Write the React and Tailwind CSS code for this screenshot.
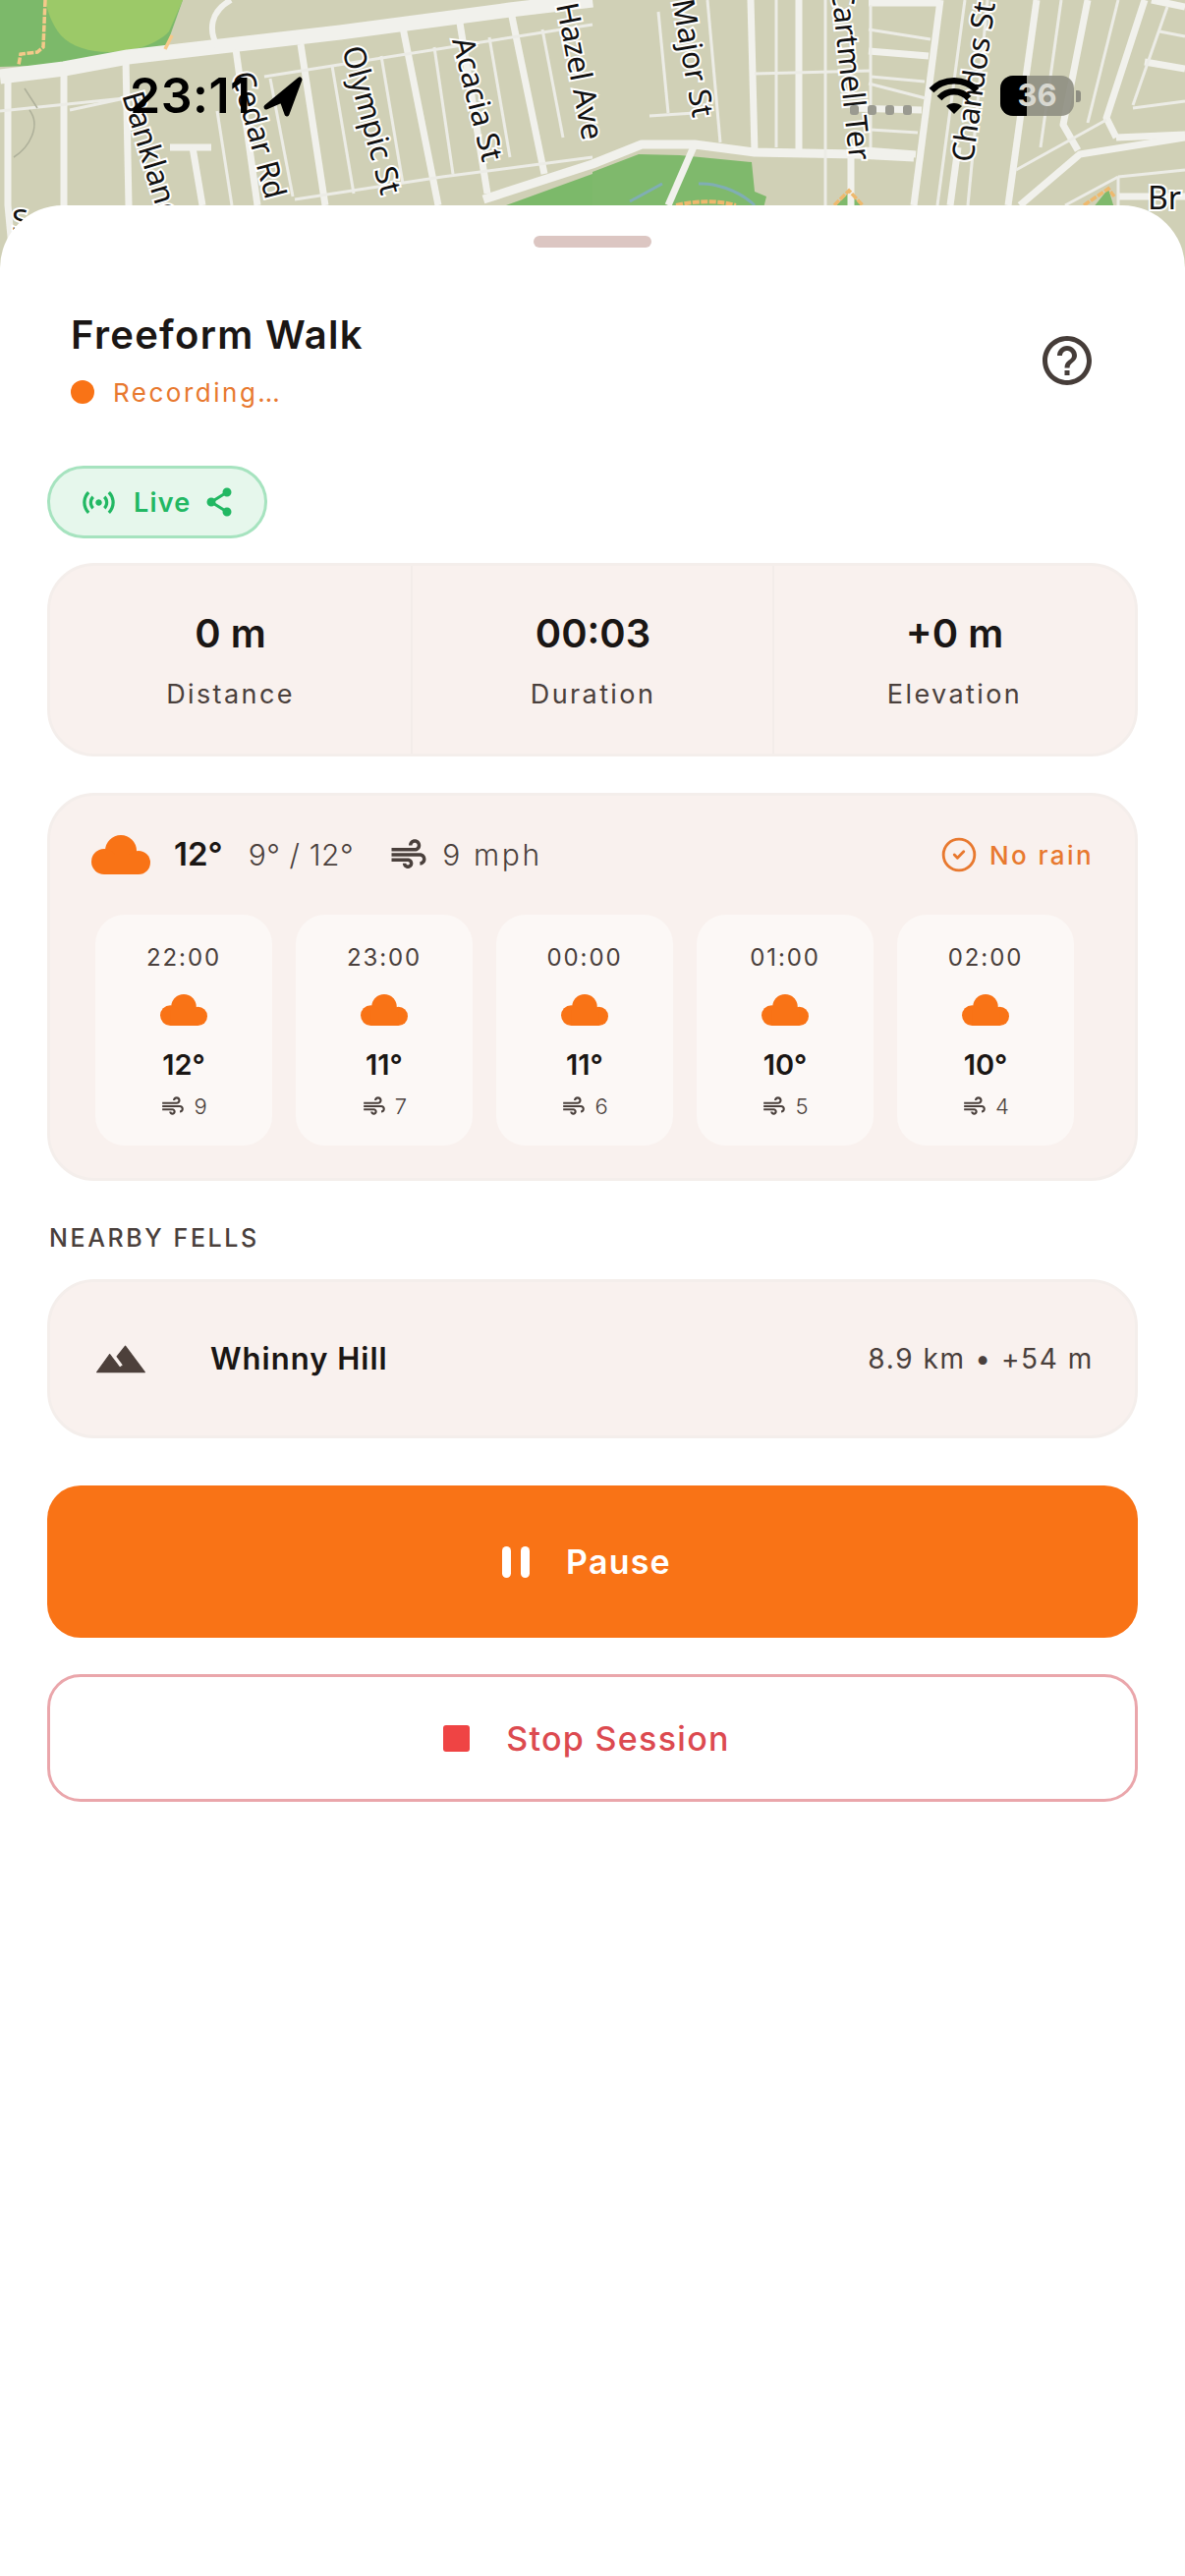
import React from "react";
import { MdAir, MdHelpOutline, MdSensors } from "react-icons/md";
import { CircleCheck } from "lucide-react";

const wide = [
  "0,78 65,70 130,58 346,33 519,10 603,0",
  "8,78 8,209 14,273", "65,70 65,273", "128,60 131,209", "240,50 262,209",
  "306,45 331,209", "410,28 446,209", "467,17 496,197", "519,7 554,177", "173,150 215,150", "196,150 206,209",
  "492,203 603,167 653,147 707,147 768,155 872,157 930,160",
  "707,147 680,209", "764,0 768,155", "813,0 813,157", "866,157 866,209", "884,3 957,3", "884,52 945,57", "865,110 938,112",
  "880,153 932,157", "957,0 930,209", "1055,0 1026,209", "1107,0 1082,127 1097,153", "1165,0 1126,120 1136,140", "1038,209 1099,157 1206,140",
  "1136,140 1206,137", "1165,63 1206,70", "1172,0 1206,7", "967,209 975,150", "1206,200 1138,200",
];
const thin = [
  "0,113 127,100", "71,112 127,100", "269,78 603,25", "300,203 450,180 603,160", "338,67 360,197", "388,57 410,187", "442,48 461,177", "498,38 519,160",
  "552,30 573,140", "221,113 236,209", "275,80 298,200", "670,12 680,115", "720,0 733,145", "661,118 707,115", "768,75 886,72", "790,0 790,150", "840,0 840,209",
  "886,5 886,150", "884,30 947,40", "884,85 942,100", "886,78 941,83", "886,132 934,135", "982,0 954,209", "1005,0 985,209", "1080,0 1059,150",
  "1138,0 1107,125", "1034,173 1126,122", "1180,32 1206,37", "1188,7 1153,107", "1153,110 1206,103", "1138,180 1206,173", "1138,180 1138,209", "1084,209 1138,180",
];
const labels = [
  ["Banklands", 124, 97, 73],
  ["Cedar Rd", 236, 76, 75],
  ["Olympic St", 348, 50, 75],
  ["Acacia St", 460, 41, 76],
  ["Hazel Ave", 566, 5, 79],
  ["Major St", 684, 1, 80],
  ["Cartmell Ter", 846, -12, 84],
  ["Chandos St", 990, 166, -82],
];

function MapPicture() {
  return (
    <svg width="1206" height="273" viewBox="0 0 1206 273" className="block">
      <rect width="1206" height="273" fill="#d0d0b6" />
      <path d="M0 0H186L170 45L150 56L65 66L0 68Z" fill="#7cb96a" />
      <path d="M46 0H186L172 32C150 56 85 62 62 36C52 24 48 10 46 0Z" fill="#9cc968" />
      <path d="M515 209L603 177V273H515Z" fill="#7cb96a" />
      <path d="M603 175L650 157L692 158L765 165L768 195L780 200L775 220H603Z" fill="#7fb96c" />
      <path d="M848 212L864 196L880 212Z" fill="#7fb96c" />
      <path d="M1112 212L1128 192L1134 212Z" fill="#7fb96c" />
      {wide.map((p) => (
        <polyline key={p} points={p} fill="none" stroke="#f1f1ec" strokeWidth={p.startsWith("0,78") ? 15 : p.startsWith("492") ? 9 : 7} strokeLinejoin="round" />
      ))}
      {thin.map((p) => (
        <polyline key={p} points={p} fill="none" stroke="#ecece6" strokeWidth="3" />
      ))}
      <path d="M221 47C212 30 214 12 235 0" fill="none" stroke="#f1f1ec" strokeWidth="6" />
      <path d="M46 0L44 48L38 53L21 55L19 66" fill="none" stroke="#f5c98a" strokeWidth="3.5" strokeDasharray="7 1.5" />
      <path d="M175 36L168 50" fill="none" stroke="#f5c98a" strokeWidth="3.5" />
      <path d="M688 209C710 204 730 204 749 209" fill="none" stroke="#eeb96e" strokeWidth="4" strokeDasharray="7 1.5" />
      <path d="M849 209L864 194L878 209" fill="none" stroke="#eeb96e" strokeWidth="3.5" strokeDasharray="7 1.5" />
      <path d="M1103 209L1128 192L1134 200" fill="none" stroke="#eeb96e" strokeWidth="3.5" strokeDasharray="7 1.5" />
      <path d="M641 205L674 187M711 187C725 186 750 192 768 209" fill="none" stroke="#80aeb4" strokeWidth="3" />
      <path d="M30 112C42 128 30 150 14 160M25 90L38 110" fill="none" stroke="#aeb09a" strokeWidth="1.5" />
      {labels.map(([t, x, y, r]) => (
        <text
          key={t}
          transform={`translate(${x} ${y}) rotate(${r})`}
          fontFamily="'Noto Sans', sans-serif"
          fontSize="31"
          fill="#111"
          stroke="#fff"
          strokeWidth="4"
          paintOrder="stroke"
        >
          {t}
        </text>
      ))}
      <text x="1168" y="213" fontFamily="'Noto Sans', sans-serif" fontSize="32" fill="#111" stroke="#fff" strokeWidth="4" paintOrder="stroke">Br</text>
      <text x="12" y="235" fontFamily="'Noto Sans', sans-serif" fontSize="31" fill="#111" stroke="#fff" strokeWidth="4" paintOrder="stroke">S</text>
    </svg>
  );
}

function Cloud({ className }) {
  return (
    <svg viewBox="0 0 60 40" className={className} fill="#f97316">
      <circle cx="30" cy="16" r="16" />
      <circle cx="13" cy="27" r="13" />
      <circle cx="48" cy="28" r="12" />
      <rect x="13" y="20" width="35" height="20" />
    </svg>
  );
}

function StatusBar() {
  return (
    <div className="absolute left-0 top-0 w-full h-[130px] pointer-events-none">
      <div className="absolute left-[132px] top-[72px] text-[50px] leading-[50px] font-semibold text-black font-['Inter',sans-serif] tracking-[0.5px]">23:11</div>
      <svg className="absolute left-[266px] top-[76px]" width="44" height="45" viewBox="0 0 44 45" fill="#000">
        <path d="M5 33L39 5L26 40L21 26Z" stroke="#000" strokeWidth="5" strokeLinejoin="round" />
      </svg>
      <div className="absolute left-[865px] top-[107px] flex gap-[9px]">
        {[0, 1, 2, 3].map((i) => (
          <div key={i} className="w-[9px] h-[10px] rounded-[3px] bg-[#9a9a90]" />
        ))}
      </div>
      <svg className="absolute left-[945px] top-[78px]" width="52" height="40" viewBox="0 0 52 40" fill="none" stroke="#000" strokeWidth="6.5">
        <path d="M3 14C15 1 37 1 49 14" />
        <path d="M11 22C19 13 33 13 41 22" />
        <path d="M26 38L18 30C22 26 30 26 34 30Z" fill="#000" stroke="none" />
      </svg>
      <div className="absolute left-[1018px] top-[77px] w-[75px] h-[41px] rounded-[13px] overflow-hidden bg-[#8e8e82]/90 flex">
        <div className="w-[27px] h-full bg-black" />
        <div className="absolute inset-0 flex items-center justify-center text-[31px] font-bold font-['Inter',sans-serif] text-[#d8d8d0]">36</div>
      </div>
      <div className="absolute left-[1095px] top-[92px] w-[5px] h-[12px] rounded-r-[3px] bg-[#8e8e82]" />
    </div>
  );
}

const hours = [
  ["22:00", "12°", "9"],
  ["23:00", "11°", "7"],
  ["00:00", "11°", "6"],
  ["01:00", "10°", "5"],
  ["02:00", "10°", "4"],
];

export default function App() {
  const font = "font-['Inter',sans-serif]";
  return (
    <div className={`relative w-full min-h-[2622px] bg-white ${font}`}>
      <MapPicture />
      <StatusBar />
      <div className="relative -mt-[64px] bg-white rounded-t-[64px] pt-[31px] px-12 pb-10">
        <div className="mx-auto w-[120px] h-3 rounded-full bg-[#dcc6c2]" />

        <div className="mt-[65px] flex items-center justify-between pl-6 pr-[42px]">
          <div>
            <div className="h-12 leading-[48px] text-[40px] font-semibold text-[#1a1614] tracking-[1.3px]">Freeform Walk</div>
            <div className="mt-4 h-9 flex items-center">
              <div className="w-6 h-6 rounded-full bg-[#f97316]" />
              <span className="ml-[19px] text-[26px] tracking-[2.5px] text-[#e8792f]">Recording…</span>
            </div>
          </div>
          <MdHelpOutline size={60} color="#463d39" />
        </div>

        <div className="mt-[57px] w-[224px] h-[74px] rounded-full border-[3px] border-[#a6e3bf] bg-[#e6f7ec] flex items-center pl-[33px]">
          <MdSensors size={39} color="#22b863" className="-ml-[3px]" />
          <span className="ml-[16px] mt-[2px] text-[27px] font-semibold tracking-[1.2px] text-[#22b863]">Live</span>
          <svg className="ml-[15px]" width="28" height="30" viewBox="0 0 28 30" fill="#22b863" stroke="#22b863" strokeWidth="3">
            <path d="M22 5L6 15L22 25" fill="none" />
            <circle cx="22" cy="5" r="3" />
            <circle cx="6" cy="15" r="3" />
            <circle cx="22" cy="25" r="3" />
          </svg>
        </div>

        <div className="mt-[25px] h-[197px] rounded-[48px] border-[3px] border-[#f4eeeb] bg-[#f9f1ee] grid grid-cols-3">
          {[
            ["0 m", "Distance"],
            ["00:03", "Duration"],
            ["+0 m", "Elevation"],
          ].map(([v, l], i) => (
            <div key={l} className={`-ml-[1px] flex flex-col items-center pt-[45px] ${i > 0 ? "border-l-2 border-[#f3ece9]" : ""}`}>
              <div className="h-12 leading-[48px] text-[40px] font-semibold text-[#1a1614]">{v}</div>
              <div className="mt-[20px] h-9 leading-[36px] text-[27px] tracking-[2.4px] text-[#4a403c]">{l}</div>
            </div>
          ))}
        </div>

        <div className="mt-[37px] h-[395px] rounded-[48px] border-[3px] border-[#f4eeeb] bg-[#f9f1ee] px-[42px] pt-[36px]">
          <div className="h-12 flex items-center">
            <Cloud className="w-[60px] h-10" />
            <span className="ml-[24px] text-[33px] font-semibold text-[#1a1614]">12°</span>
            <span className="ml-[26px] text-[30px] font-light text-[#4a403c] tracking-[0.6px]">9° / 12°</span>
            <MdAir size={42} color="#4a403c" className="ml-[35px]" />
            <span className="ml-[13px] text-[30px] font-light text-[#4a403c] tracking-[2.6px]">9 mph</span>
            <div className="ml-auto flex items-center">
              <CircleCheck size={38} color="#e8792f" strokeWidth={1.8} />
              <span className="ml-[12px] text-[26px] font-medium tracking-[2.4px] text-[#e8792f]">No rain</span>
            </div>
          </div>
          <div className="mt-[37px] ml-[4px] flex gap-[24px]">
            {hours.map(([t, d, w]) => (
              <div key={t} className="w-[180px] h-[235px] rounded-[30px] bg-[#fcf8f6] flex flex-col items-center pt-[28px]">
                <div className="h-8 leading-[32px] text-[24px] tracking-[1.9px] text-[#4a403c]">{t}</div>
                <Cloud className="mt-[21px] w-12 h-8" />
                <div className="mt-[22px] h-9 leading-[36px] text-[29px] font-semibold text-[#1a1614]">{d}</div>
                <div className="mt-[10px] h-7 flex items-center">
                  <MdAir size={26} color="#4a403c" />
                  <span className="ml-[8px] text-[22px] font-light text-[#4a403c]">{w}</span>
                </div>
              </div>
            ))}
          </div>
        </div>

        <div className="mt-[43px] h-[30px] leading-[30px] pl-[2px] text-[25px] font-medium tracking-[2.6px] text-[#4a403c]">NEARBY FELLS</div>

        <div className="mt-[27px] h-[162px] rounded-[48px] border-[3px] border-[#f4eeeb] bg-[#f9f1ee] flex items-center pl-[47px] pr-[42px]">
          <svg width="50" height="29" viewBox="1 6 22 12.4" fill="#4d403b" stroke="#4d403b" strokeWidth="0.5" strokeLinejoin="round">
            <path d="M14 6.3L10.25 11L13.1 14.8L11.5 16C9.81 13.75 7 10 7 10L1.3 18H22.7Z" />
          </svg>
          <span className="ml-[66px] text-[31px] font-semibold tracking-[1px] text-[#1a1614]">Whinny Hill</span>
          <span className="ml-auto text-[28px] tracking-[1.6px] text-[#4a403c]">8.9 km • +54 m</span>
        </div>

        <div className="mt-[48px] h-[155px] rounded-[34px] bg-[#f97316] flex items-center justify-center pr-[12px]">
          <div className="flex gap-[10px]">
            <div className="w-[9px] h-8 rounded-full bg-white" />
            <div className="w-[9px] h-8 rounded-full bg-white" />
          </div>
          <span className="ml-[37px] text-[34px] font-semibold tracking-[1.2px] text-white">Pause</span>
        </div>

        <div className="mt-[37px] h-[130px] rounded-[34px] border-[3px] border-[#eaa6ab] bg-white flex items-center justify-center pr-[12px]">
          <div className="w-[27px] h-[27px] rounded-[3px] bg-[#ef4444]" />
          <span className="ml-[37px] text-[34px] font-medium tracking-[1.3px] text-[#dc4a50]">Stop Session</span>
        </div>
      </div>
    </div>
  );
}
